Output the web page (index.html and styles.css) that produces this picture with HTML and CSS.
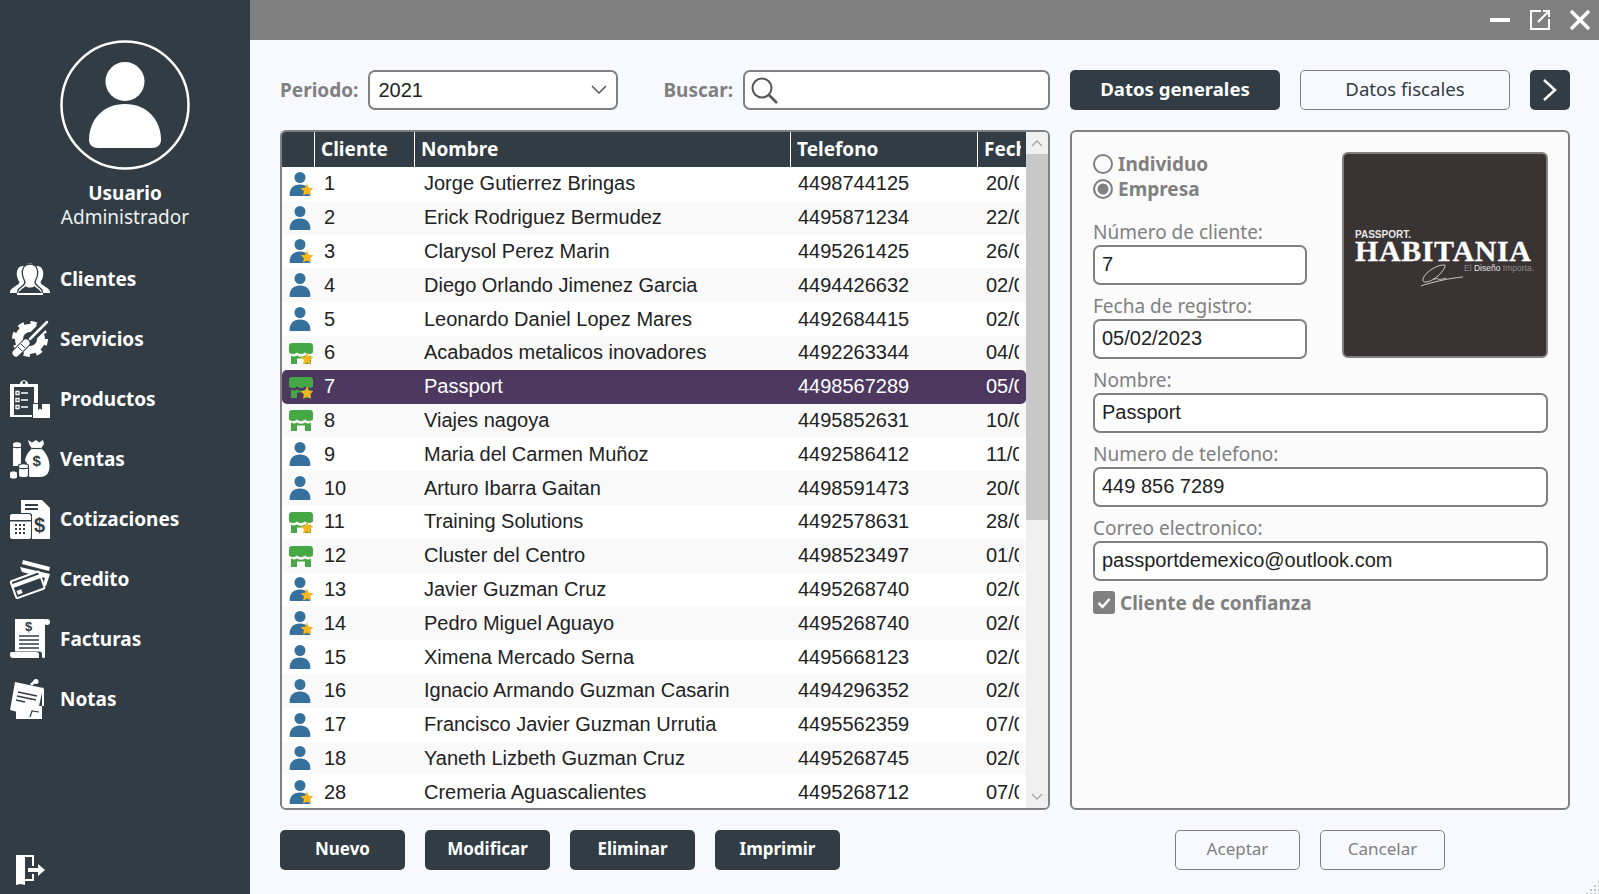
FILE: index.html
```html
<!DOCTYPE html>
<html lang="es">
<head>
  <meta charset="UTF-8" />
  <title>Clientes</title>
  <link rel="stylesheet" href="styles.css">
</head>
<body>

  <!-- Iconos de la tabla -->
  <svg class="defs" width="0" height="0">
    <symbol id="i-star" viewBox="0 0 14 14">
      <path fill="#f6b61e" d="M7 .6l1.900 4.100 4.500.5-3.300 3 .9 4.500L7 10.500l-4 2.200.9-4.500-3.300-3 4.500-.5z"/>
    </symbol>
    <symbol id="i-person" viewBox="0 0 26 26">
      <circle cx="12" cy="6.500" r="5.500" fill="#35719c"/>
      <path fill="#35719c" d="M2.500 25c-.8 0-.9-.8-.9-1.500C1.600 17.500 5.500 13.500 12 13.500s10.400 4 10.400 10c0 .7-.1 1.500-.9 1.500z"/>
    </symbol>
    <symbol id="i-store" viewBox="0 0 26 26">
      <path fill="#46a844" d="M4 3h18c1.700 0 3 1.300 3 3v6.500q-4 3-8 0q-4 3-8 0q-4 3-8 0V6c0-1.700 1.300-3 3-3z"/>
      <path fill="#46a844" d="M3 15.500q3 2 6 0q4 2.500 8 0q3 2 6 0V24h-6v-5.500H9V24H3z"/>
    </symbol>
  </svg>

  <div class="app">
    <aside class="sidebar">
      <svg class="avatar" viewBox="0 0 130 130" width="130" height="130">
        <circle cx="65" cy="65" r="63.500" fill="none" stroke="#fff" stroke-width="2.500"/>
        <circle cx="65" cy="41.500" r="19.500" fill="#fff"/>
        <path fill="#fff" d="M38 108c-5 0-9-3-9-8 0-20 14-36 36-36s36 16 36 36c0 5-4 8-9 8z"/>
      </svg>
      <div class="user-name">Usuario</div>
      <div class="user-role">Administrador</div>

      <nav class="nav">
        <a class="nav-item">
          <svg class="nav-icon" viewBox="0 0 40 40">
            <path fill="#fff" d="M13 7c-5 0-7 5-6 10 .3 3 2 5 2.500 6.500C8 27 2 27.500 0 32.500V34h40v-1.500c-2-5-8-5.500-9.500-9 .5-1.500 2.200-3.500 2.500-6.500 1-5-1-10-6-10-2.500 0-4-3-7-3s-4.500 3-7 3z"/>
            <path fill="none" stroke="#313c44" stroke-width="1.300" d="M20 5c-6 0-8.500 5-7.500 11 .4 3 2 5.500 2.500 7 .5 3-4 4-7 8l-.5 4M20 5c6 0 8.500 5 7.500 11-.4 3-2 5.500-2.500 7-.5 3 4 4 7 8l.5 4"/>
            <path fill="#313c44" d="M8.500 34c1-3 5-4.500 7-7 2 2 7 2 9 0 2 2.500 6 4 7 7z"/>
            <path fill="#fff" d="M7 34h26v2H7z"/>
          </svg>
          <span>Clientes</span>
        </a>
        <a class="nav-item">
          <svg class="nav-icon" viewBox="0 0 40 40">
            <circle cx="20" cy="20" r="11" fill="none" stroke="#fff" stroke-width="8"/>
            <circle cx="20" cy="20" r="15.500" fill="none" stroke="#fff" stroke-width="5" stroke-dasharray="6 6.170"/>
            <path stroke="#313c44" stroke-width="9" d="M3 37L36 4"/>
            <path stroke="#fff" stroke-width="2.500" stroke-linecap="round" d="M20 20L37 3"/>
            <path stroke="#fff" stroke-width="7" stroke-linecap="round" d="M6 34l10-10"/>
            <path stroke="#313c44" stroke-width="1" d="M8 28l4 4M11 25l4 4"/>
          </svg>
          <span>Servicios</span>
        </a>
        <a class="nav-item">
          <svg class="nav-icon" viewBox="0 0 40 40">
            <path fill="#fff" d="M0 5h10c0-5 8-5 8 0h10v19h-4V8H4v28h18v2H0z"/>
            <circle cx="14" cy="3.500" r="1.500" fill="#313c44"/>
            <path fill="none" stroke="#fff" stroke-width="1.300" d="M6 12.500h3v3H6zM6 19.500h3v3H6zM6 26.500h3v3H6z"/>
            <path stroke="#fff" stroke-width="1.600" d="M11 14h7M11 21h7M11 28h7"/>
            <path fill="#fff" d="M23 25h5v6l2-1.500 2 1.500v-6h8v14H23z"/>
          </svg>
          <span>Productos</span>
        </a>
        <a class="nav-item">
          <svg class="nav-icon" viewBox="0 0 40 40">
            <path fill="#fff" d="M3 5c0-2.500 8-2.500 8 0v22H3z"/>
            <path stroke="#313c44" stroke-width="1" d="M3 8c2 1 6 1 8 0"/>
            <path fill="#fff" d="M18 1l4 2.500L26 1l3 2.500L33 1l1 4-3 4.500C36 13 39.500 20 39.500 27c0 7-3 11-9.500 11h-9c-2 0-3-1-4-3V24c-1-1-2-2-2-3 1-5 4-9 7-11.500L19 5z"/>
            <path stroke="#313c44" stroke-width="1.200" d="M22 9.500h9"/>
            <text class="svg-dollar" x="22.500" y="27" font-size="15" fill="#313c44">$</text>
            <path fill="#fff" stroke="#313c44" stroke-width="1.200" d="M8.500 27c0-3 10-3 10 0v9.500c0 3-10 3-10 0z"/>
            <path stroke="#313c44" stroke-width="1" d="M9 29c2 1 7 1 9 0"/>
            <path fill="#fff" d="M0 34c0-2 7-2 7 0v4c0 2-7 2-7 0z"/>
          </svg>
          <span>Ventas</span>
        </a>
        <a class="nav-item">
          <svg class="nav-icon" viewBox="0 0 40 40">
            <path fill="#fff" d="M11 1h21l8 8v31H22V16c0-1-1-2-3-2h-8z"/>
            <path fill="#313c44" d="M15 5h13v2H15zM15 9h13v2H15z"/>
            <path fill="#fff" d="M2 15h17c1 0 2 1 2 2v21c0 1-1 2-2 2H2c-1 0-2-1-2-2V17c0-1 1-2 2-2z"/>
            <path fill="#313c44" d="M0 21h21v1.500H0z"/>
            <path stroke="#313c44" stroke-width="2" stroke-dasharray="2 2" d="M5 26h12M5 30h12M5 34h12"/>
            <text class="svg-dollar" x="24" y="33" font-size="20" fill="#313c44">$</text>
          </svg>
          <span>Cotizaciones</span>
        </a>
        <a class="nav-item">
          <svg class="nav-icon" viewBox="0 0 40 40">
            <path fill="#fff" d="M13 1l27 7-1 4-27-7z"/>
            <path fill="#fff" d="M10 8l30 7-4 12-3-1 2-7-23-6z"/>
            <g transform="rotate(-20 20 25)">
              <rect x="2.500" y="16" width="30" height="18" rx="1.500" fill="#313c44" stroke="#fff" stroke-width="2"/>
              <rect x="2" y="19" width="31" height="4" fill="#fff"/>
              <rect x="5" y="27" width="5" height="4" fill="#fff"/>
            </g>
          </svg>
          <span>Credito</span>
        </a>
        <a class="nav-item">
          <svg class="nav-icon" viewBox="0 0 40 40">
            <path fill="#fff" d="M5 0h30v38c0 1.500-2 1.500-3 0v-3c0-1.500-1-2.500-3-2.500H5z"/>
            <circle cx="37" cy="3" r="3" fill="#fff"/>
            <path fill="#fff" d="M1 33h25c2 0 3 1 3 3v3H3c-2 0-3-1-3-3 0-1 0-3 1-3z"/>
            <text class="svg-dollar" x="15" y="12" font-size="13" fill="#313c44">$</text>
            <path stroke="#313c44" stroke-width="1.500" d="M9 17h20M9 21h20M9 25h20M9 29h20"/>
          </svg>
          <span>Facturas</span>
        </a>
        <a class="nav-item">
          <svg class="nav-icon" viewBox="0 0 40 40">
            <path fill="#fff" d="M6 27h28V10l-2-2v32H6z"/>
            <path fill="#fff" d="M5 3l28 6-5 23-4 3-4-2-1 3L0 31z"/>
            <path stroke="#313c44" stroke-width="1.600" d="M8 13l19 4M7 17l19 4M6 21l9 2"/>
            <path stroke="#fff" stroke-width="2.500" d="M21 6l5-5"/>
            <circle cx="26" cy="2.500" r="2.500" fill="#fff"/>
            <path stroke="#313c44" stroke-width="1.200" fill="none" d="M20 38l2-6 7 1"/>
          </svg>
          <span>Notas</span>
        </a>
      </nav>

      <svg class="exit-icon" viewBox="0 0 30 30" width="30" height="30">
        <path fill="#fff" d="M0 0h18v11h-2V2l-7 0v26L0 30z"/>
        <path fill="#fff" d="M0 0l9 2v28l-9-2zM16 19h2v7H9v-2h7z"/>
        <path fill="#fff" d="M12 13h10V9l7 6-7 6v-4H12z"/>
      </svg>
    </aside>

    <main class="main">
      <header class="titlebar">
        <svg class="win-icon" viewBox="0 0 20 20"><path fill="#fff" d="M0 8h20v4H0z"/></svg>
        <svg class="win-icon" viewBox="0 0 20 20">
          <path fill="none" stroke="#fff" stroke-width="2" d="M11 1H1v18h18V9"/>
          <path fill="none" stroke="#fff" stroke-width="2" d="M8 12L19 1M13 1h6v6"/>
        </svg>
        <svg class="win-icon" viewBox="0 0 20 20"><path stroke="#fff" stroke-width="3.500" d="M1 1l18 18M19 1L1 19"/></svg>
      </header>

      <div class="content">
        <div class="toolbar">
          <label class="bold-label">Periodo:</label>
          <div class="field select-box">
            <span>2021</span>
            <svg viewBox="0 0 16 10" width="16" height="10"><path fill="none" stroke="#555" stroke-width="1.500" d="M1 1l7 7 7-7"/></svg>
          </div>
          <label class="bold-label search-label">Buscar:</label>
          <div class="field search-box">
            <svg viewBox="0 0 28 28" width="28" height="28">
              <circle cx="12" cy="12" r="9.500" fill="none" stroke="#555" stroke-width="2"/>
              <path stroke="#555" stroke-width="2.500" d="M19 19l8 8"/>
            </svg>
          </div>
        </div>

        <div class="tabs">
          <button class="btn btn-dark tab">Datos generales</button>
          <button class="btn btn-light tab">Datos fiscales</button>
          <button class="btn btn-dark tab-next">
            <svg viewBox="0 0 16 24" width="16" height="24"><path fill="none" stroke="#fff" stroke-width="2.500" d="M2 2l11 10L2 22"/></svg>
          </button>
        </div>

        <section class="grid-panel">
          <div class="grid-body">
            <div class="grid-head row">
              <div></div><div>Cliente</div><div>Nombre</div><div>Telefono</div><div><span class="head-date">Fecha</span></div>
            </div>
            <div class="row"><div class="c-ico"><svg><use href="#i-person"/><use href="#i-star" x="12" y="12" width="14" height="14"/></svg></div><div class="c-num">1</div><div class="c-name">Jorge Gutierrez Bringas</div><div class="c-tel">4498744125</div><div class="c-date">20/02/2023</div></div>
            <div class="row"><div class="c-ico"><svg><use href="#i-person"/></svg></div><div class="c-num">2</div><div class="c-name">Erick Rodriguez Bermudez</div><div class="c-tel">4495871234</div><div class="c-date">22/02/2023</div></div>
            <div class="row"><div class="c-ico"><svg><use href="#i-person"/><use href="#i-star" x="12" y="12" width="14" height="14"/></svg></div><div class="c-num">3</div><div class="c-name">Clarysol Perez Marin</div><div class="c-tel">4495261425</div><div class="c-date">26/02/2023</div></div>
            <div class="row"><div class="c-ico"><svg><use href="#i-person"/></svg></div><div class="c-num">4</div><div class="c-name">Diego Orlando Jimenez Garcia</div><div class="c-tel">4494426632</div><div class="c-date">02/02/2023</div></div>
            <div class="row"><div class="c-ico"><svg><use href="#i-person"/></svg></div><div class="c-num">5</div><div class="c-name">Leonardo Daniel Lopez Mares</div><div class="c-tel">4492684415</div><div class="c-date">02/02/2023</div></div>
            <div class="row"><div class="c-ico"><svg><use href="#i-store"/><use href="#i-star" x="12" y="12" width="14" height="14"/></svg></div><div class="c-num">6</div><div class="c-name">Acabados metalicos inovadores</div><div class="c-tel">4492263344</div><div class="c-date">04/02/2023</div></div>
            <div class="row selected"><div class="c-ico"><svg><use href="#i-store"/><use href="#i-star" x="12" y="12" width="14" height="14"/></svg></div><div class="c-num">7</div><div class="c-name">Passport</div><div class="c-tel">4498567289</div><div class="c-date">05/02/2023</div></div>
            <div class="row"><div class="c-ico"><svg><use href="#i-store"/></svg></div><div class="c-num">8</div><div class="c-name">Viajes nagoya</div><div class="c-tel">4495852631</div><div class="c-date">10/02/2023</div></div>
            <div class="row"><div class="c-ico"><svg><use href="#i-person"/></svg></div><div class="c-num">9</div><div class="c-name">Maria del Carmen Muñoz</div><div class="c-tel">4492586412</div><div class="c-date">11/02/2023</div></div>
            <div class="row"><div class="c-ico"><svg><use href="#i-person"/></svg></div><div class="c-num">10</div><div class="c-name">Arturo Ibarra Gaitan</div><div class="c-tel">4498591473</div><div class="c-date">20/02/2023</div></div>
            <div class="row"><div class="c-ico"><svg><use href="#i-store"/><use href="#i-star" x="12" y="12" width="14" height="14"/></svg></div><div class="c-num">11</div><div class="c-name">Training Solutions</div><div class="c-tel">4492578631</div><div class="c-date">28/02/2023</div></div>
            <div class="row"><div class="c-ico"><svg><use href="#i-store"/></svg></div><div class="c-num">12</div><div class="c-name">Cluster del Centro</div><div class="c-tel">4498523497</div><div class="c-date">01/03/2023</div></div>
            <div class="row"><div class="c-ico"><svg><use href="#i-person"/><use href="#i-star" x="12" y="12" width="14" height="14"/></svg></div><div class="c-num">13</div><div class="c-name">Javier Guzman Cruz</div><div class="c-tel">4495268740</div><div class="c-date">02/03/2023</div></div>
            <div class="row"><div class="c-ico"><svg><use href="#i-person"/><use href="#i-star" x="12" y="12" width="14" height="14"/></svg></div><div class="c-num">14</div><div class="c-name">Pedro Miguel Aguayo</div><div class="c-tel">4495268740</div><div class="c-date">02/03/2023</div></div>
            <div class="row"><div class="c-ico"><svg><use href="#i-person"/></svg></div><div class="c-num">15</div><div class="c-name">Ximena Mercado Serna</div><div class="c-tel">4495668123</div><div class="c-date">02/03/2023</div></div>
            <div class="row"><div class="c-ico"><svg><use href="#i-person"/></svg></div><div class="c-num">16</div><div class="c-name">Ignacio Armando Guzman Casarin</div><div class="c-tel">4494296352</div><div class="c-date">02/03/2023</div></div>
            <div class="row"><div class="c-ico"><svg><use href="#i-person"/></svg></div><div class="c-num">17</div><div class="c-name">Francisco Javier Guzman Urrutia</div><div class="c-tel">4495562359</div><div class="c-date">07/03/2023</div></div>
            <div class="row"><div class="c-ico"><svg><use href="#i-person"/></svg></div><div class="c-num">18</div><div class="c-name">Yaneth Lizbeth Guzman Cruz</div><div class="c-tel">4495268745</div><div class="c-date">02/03/2023</div></div>
            <div class="row"><div class="c-ico"><svg><use href="#i-person"/><use href="#i-star" x="12" y="12" width="14" height="14"/></svg></div><div class="c-num">28</div><div class="c-name">Cremeria Aguascalientes</div><div class="c-tel">4495268712</div><div class="c-date">07/03/2023</div></div>
          </div>
          <div class="scrollbar">
            <svg viewBox="0 0 12 8" width="12" height="8"><path fill="none" stroke="#a6a6a6" stroke-width="1.300" d="M1 7l5-5 5 5"/></svg>
            <div class="scroll-track"><div class="scroll-thumb"></div></div>
            <svg viewBox="0 0 12 8" width="12" height="8"><path fill="none" stroke="#a6a6a6" stroke-width="1.300" d="M1 1l5 5 5-5"/></svg>
          </div>
        </section>

        <section class="detail-panel">
          <div class="detail-top">
            <div class="detail-left">
              <div class="radios">
                <div class="radio-row"><span class="radio"></span>Individuo</div>
                <div class="radio-row"><span class="radio checked"></span>Empresa</div>
              </div>
              <label class="form-label first">Número de cliente:</label>
              <input class="field text-input" type="text" value="7" />
              <label class="form-label">Fecha de registro:</label>
              <input class="field text-input" type="text" value="05/02/2023" />
            </div>
            <div class="logo">
              <div class="logo-small">PASSPORT.</div>
              <div class="logo-big">HABITANIA</div>
              <div class="logo-tag">
                <svg viewBox="0 0 44 24" width="44" height="24">
                  <path fill="none" stroke="#d8d6d6" stroke-width=".9" d="M1 23c8-3 28-8 42-9M25 2C18 1 5 9 3 16c-1 5 6 3 11 0S26 5 25 2zM13 16c3 0 4-1 5 0s5 0 8-1"/>
                </svg>
                <span><i>El </i>Diseño <i>Importa.</i></span>
              </div>
            </div>
          </div>
          <label class="form-label">Nombre:</label>
          <input class="field text-input" type="text" value="Passport" />
          <label class="form-label">Numero de telefono:</label>
          <input class="field text-input" type="text" value="449 856 7289" />
          <label class="form-label">Correo electronico:</label>
          <input class="field text-input" type="text" value="passportdemexico@outlook.com" />
          <div class="check-row">
            <span class="check">
              <svg viewBox="0 0 14 12" width="14" height="12"><path fill="none" stroke="#fff" stroke-width="2.500" d="M1.500 6l4 4 7-8"/></svg>
            </span>
            Cliente de confianza
          </div>
        </section>

        <div class="actions">
          <button class="btn btn-dark action">Nuevo</button>
          <button class="btn btn-dark action">Modificar</button>
          <button class="btn btn-dark action">Eliminar</button>
          <button class="btn btn-dark action">Imprimir</button>
        </div>

        <div class="actions actions-right">
          <button class="btn btn-ghost action">Aceptar</button>
          <button class="btn btn-ghost action">Cancelar</button>
        </div>
      </div>
    </main>
  </div>

  <div class="resize-grip"></div>
</body>
</html>
```

FILE: styles.css
```css
body, html {
  margin: 0;
  padding: 0;
  overflow: hidden;
  height: 100%;
  font-family: "Noto Sans", sans-serif;
  background-color: #f8f9fe;
}

.defs {
  position: absolute;
}

.app {
  display: flex;
  height: 894px;
}

/* Menu lateral */
.sidebar {
  width: 250px;
  flex: none;
  background-color: #313c44;
  color: white;
  display: flex;
  flex-direction: column;
  align-items: center;
  padding-top: 40px;
  box-sizing: border-box;
}

.user-name {
  margin-top: 11px;
  font-size: 19px;
  font-weight: 700;
  line-height: 25px;
}

.user-role {
  font-size: 19px;
  line-height: 23px;
  color: #eef0f1;
}

.nav {
  margin-top: 20px;
  width: 100%;
}

.nav-item {
  display: flex;
  align-items: center;
  gap: 10px;
  height: 60px;
  padding-left: 10px;
  font-size: 19px;
  font-weight: 700;
  color: white;
}

.nav-icon {
  width: 40px;
  height: 40px;
  flex: none;
}

.svg-dollar {
  font-family: "Liberation Sans", sans-serif;
}

.exit-icon {
  margin-top: auto;
  margin-bottom: 9px;
  align-self: flex-start;
  margin-left: 16px;
}

/* Barra de ventana */
.main {
  flex: 1;
  display: flex;
  flex-direction: column;
}

.titlebar {
  height: 40px;
  flex: none;
  background-color: #808080;
  display: flex;
  justify-content: flex-end;
  align-items: center;
  gap: 20px;
  padding-right: 9px;
}

.win-icon {
  width: 20px;
  height: 20px;
}

.content {
  display: grid;
  grid-template-columns: 770px 500px;
  grid-template-rows: 40px 680px 40px;
  gap: 20px;
  padding: 30px 29px 0 30px;
}

/* Barra superior */
.toolbar {
  display: flex;
  align-items: center;
  gap: 10px;
}

.bold-label {
  font-size: 19px;
  font-weight: 700;
  color: #808080;
}

.search-label {
  margin-left: auto;
}

.field {
  box-sizing: border-box;
  height: 40px;
  background-color: white;
  border: 2px solid #808080;
  border-radius: 7px;
  font-family: "Liberation Sans", sans-serif;
  font-size: 20px;
  color: #222;
}

.select-box {
  width: 250px;
  display: flex;
  align-items: center;
  justify-content: space-between;
  padding: 0 9px 0 8px;
}

.search-box {
  width: 307px;
  display: flex;
  align-items: center;
  padding-left: 5px;
}

.btn {
  box-sizing: border-box;
  height: 40px;
  border-radius: 5px;
  font-family: "Noto Sans", sans-serif;
  font-size: 18.6px;
  cursor: pointer;
  padding: 0 0 3px;
}

.btn-dark {
  background-color: #313c44;
  border: none;
  color: white;
  font-weight: 700;
}

.btn-light {
  background-color: transparent;
  border: 1px solid #808080;
  color: #313c44;
}

.btn-ghost {
  background-color: transparent;
  border: 1px solid #808080;
  color: #808080;
}

.tabs {
  display: flex;
  gap: 20px;
}

.tab {
  width: 210px;
}

.tab-next {
  width: 40px;
  padding: 0;
  display: flex;
  align-items: center;
  justify-content: center;
}

/* Tabla de clientes */
.grid-panel {
  display: flex;
  box-sizing: border-box;
  background-color: white;
  border: 2px solid #808080;
  border-radius: 6px;
  overflow: hidden;
}

.grid-body {
  flex: 1;
  min-width: 0;
  font-family: "Liberation Sans", sans-serif;
  font-size: 20px;
  color: #222;
}

.row {
  display: grid;
  grid-template-columns: 32px 100px 376px 187px 49px;
  height: 33.8px;
  align-items: center;
  white-space: nowrap;
}

.row:nth-child(odd) {
  background-color: #f9f9f9;
}

.grid-head.row {
  height: 35px;
  background-color: #313c44;
  color: white;
  font-family: "Noto Sans", sans-serif;
  font-size: 19px;
  font-weight: 700;
  align-items: stretch;
  line-height: 35px;
}

.grid-head > div {
  border-left: 1px solid white;
  padding-left: 6px;
  overflow: hidden;
}

.grid-head > div:first-child {
  border-left: none;
}

.head-date {
  display: block;
  width: 37px;
  overflow: hidden;
}

.row.selected {
  background-color: #4d3960;
  color: white;
  border-radius: 5px;
}

.c-ico svg {
  display: block;
  width: 26px;
  height: 26px;
  margin-left: 6px;
}

.c-num {
  padding-left: 10px;
}

.c-name {
  padding-left: 10px;
}

.c-tel {
  padding-left: 8px;
}

.c-date {
  padding-left: 9px;
  margin-right: 7px;
  overflow: hidden;
}

.scrollbar {
  width: 22px;
  flex: none;
  background-color: #f0f0f0;
  display: flex;
  flex-direction: column;
  align-items: center;
  justify-content: space-between;
  padding: 7px 0;
  box-sizing: border-box;
}

.scroll-track {
  flex: 1;
  width: 100%;
  margin: 7px 0;
}

.scroll-thumb {
  height: 366px;
  background-color: #c8c8c8;
}

/* Panel de datos */
.detail-panel {
  box-sizing: border-box;
  background-color: #fbfbfc;
  border: 2px solid #808080;
  border-radius: 6px;
  padding: 20px 20px 0 21px;
  display: flex;
  flex-direction: column;
}

.detail-top {
  display: flex;
  justify-content: space-between;
}

.detail-left {
  width: 214px;
  display: flex;
  flex-direction: column;
}

.radios {
  font-size: 19px;
  font-weight: 700;
  color: #808080;
}

.radio-row {
  display: flex;
  align-items: center;
  gap: 5px;
  height: 24.5px;
}

.radio {
  box-sizing: border-box;
  width: 20px;
  height: 20px;
  border: 2px solid #808080;
  border-radius: 50%;
}

.radio.checked {
  background-color: #808080;
  box-shadow: inset 0 0 0 2.5px white;
}

.form-label {
  font-size: 19px;
  line-height: 26px;
  margin-top: 8px;
  color: #808080;
}

.form-label.first {
  margin-top: 17.5px;
}

.text-input {
  width: 100%;
  padding: 0 7px 1px;
  outline: none;
  flex: none;
}

.logo {
  box-sizing: border-box;
  width: 206px;
  height: 206px;
  background-color: #3a3334;
  border: 2px solid #808080;
  border-radius: 6px;
  color: white;
  display: flex;
  flex-direction: column;
  justify-content: center;
  padding: 5px 0 0 11px;
}

.logo-small {
  font-family: "Liberation Sans", sans-serif;
  font-size: 10px;
  font-weight: 700;
  line-height: 11px;
  color: #e8e6e6;
}

.logo-big {
  font-family: "Liberation Serif", serif;
  font-size: 30px;
  font-weight: 700;
  line-height: 21px;
  letter-spacing: .6px;
  -webkit-text-stroke: .3px white;
}

.logo-tag {
  display: flex;
  align-items: flex-start;
  justify-content: flex-end;
  margin: 2px 12px 0 0;
  font-family: "Liberation Sans", sans-serif;
  font-size: 8.5px;
  color: #e8e6e6;
}

.logo-tag i {
  font-style: normal;
  color: #8d8a8a;
}

.check-row {
  display: flex;
  align-items: center;
  gap: 5px;
  margin-top: 9px;
  font-size: 19px;
  font-weight: 700;
  color: #808080;
}

.check {
  width: 22px;
  height: 23px;
  background-color: #808080;
  border-radius: 3px;
  display: flex;
  align-items: center;
  justify-content: center;
}

/* Botones inferiores */
.actions {
  display: flex;
  gap: 20px;
}

.actions-right {
  padding-left: 105px;
}

.action {
  width: 125px;
  font-size: 17px;
}

/* Esquina de la ventana */
.resize-grip {
  position: absolute;
  right: 0;
  bottom: 0;
  width: 14px;
  height: 14px;
  background-image: radial-gradient(circle, #c4c6cc 1px, transparent 1.2px);
  background-size: 4px 4px;
  clip-path: polygon(100% 0, 100% 100%, 0 100%);
}
```
